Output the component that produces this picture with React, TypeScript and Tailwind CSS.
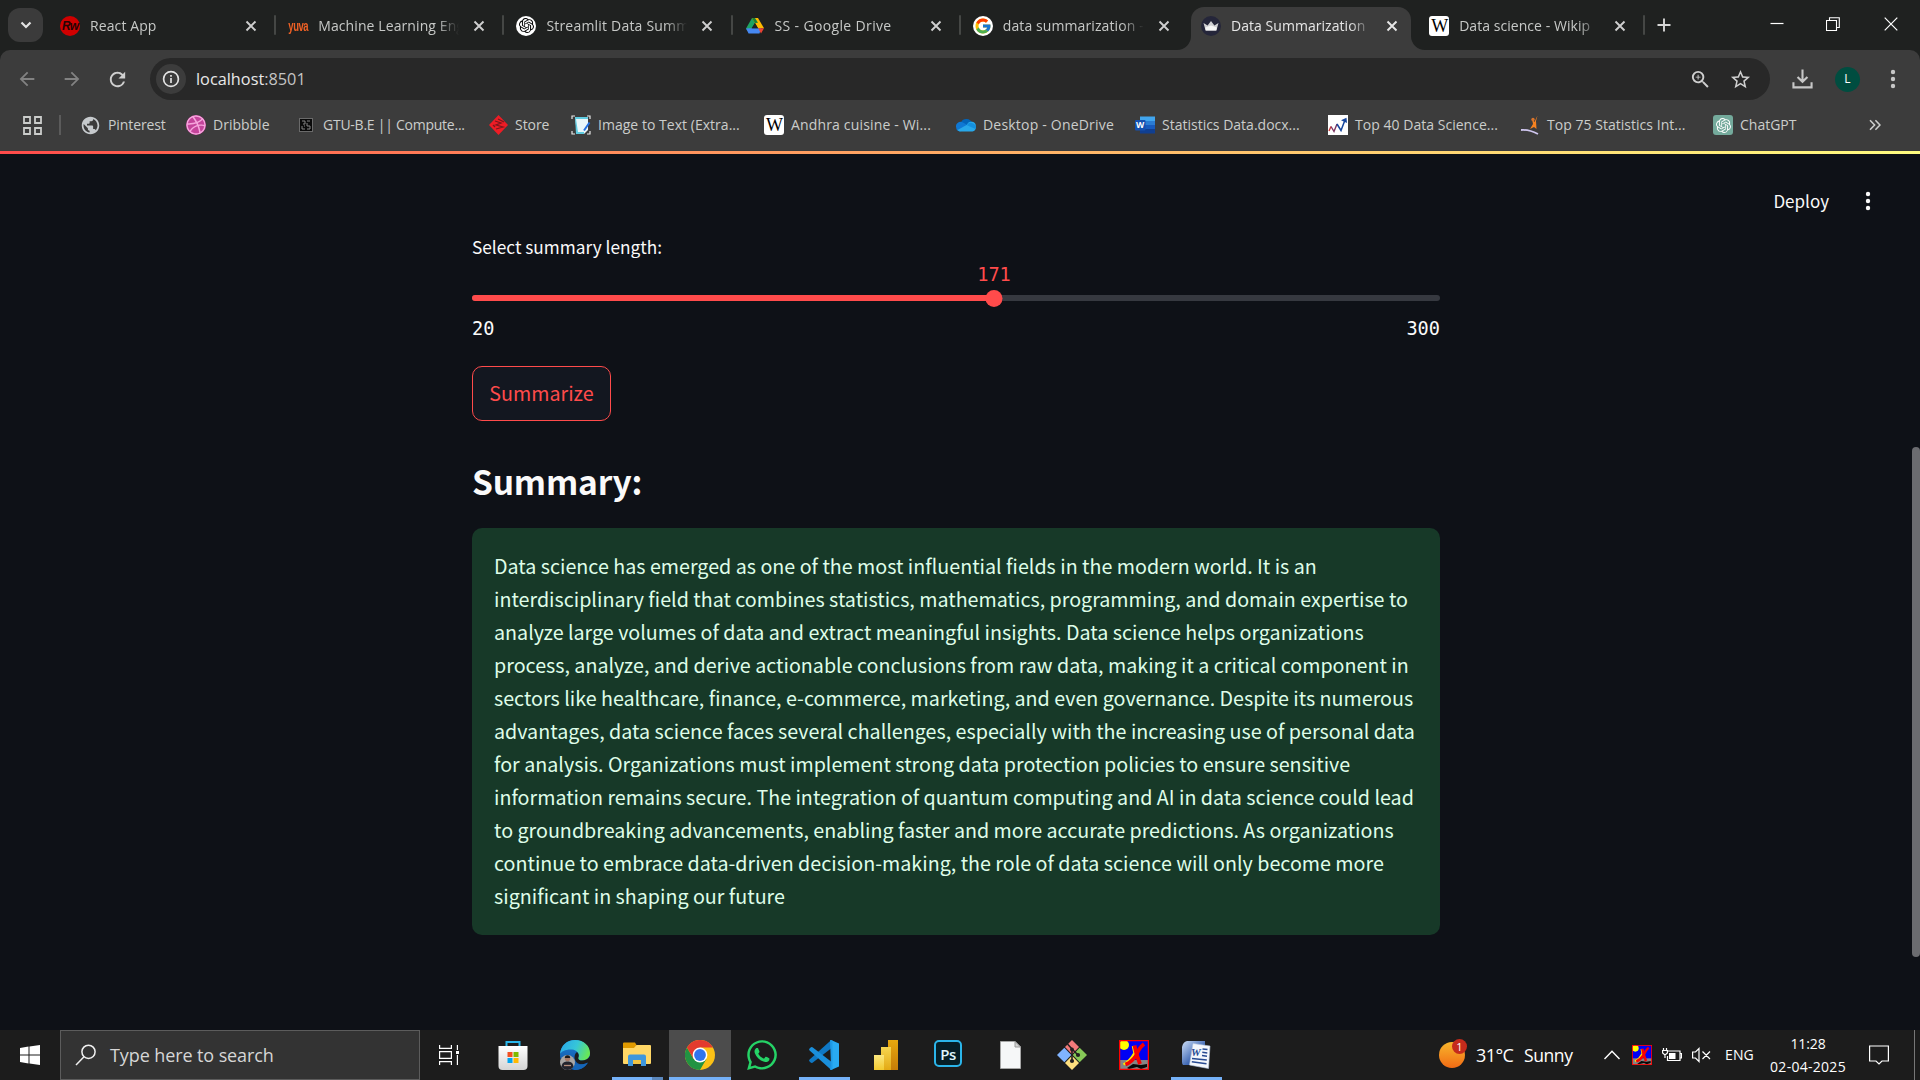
import React from "react";
import type { ReactNode } from "react";
import { FcGoogle } from "react-icons/fc";
import { SiOpenai } from "react-icons/si";
import { FaDribbble, FaWhatsapp } from "react-icons/fa";
import { MdArrowBack, MdArrowForward, MdRefresh, MdStarOutline, MdZoomIn, MdPublic } from "react-icons/md";

/* ---------- favicons ---------- */

const Wiki = () => (
  <span className="flex h-5 w-5 items-center justify-center rounded-[3px] bg-white font-['Liberation_Serif',serif] text-[18px] leading-5 tracking-[-1px] text-black">W</span>
);

const ReactWorld = () => (
  <span className="flex h-5 w-5 items-center justify-center rounded-full bg-[#d00000] font-['Liberation_Sans',sans-serif] text-[12px] font-bold italic leading-5 tracking-[-1px] text-[#240404]">Rw</span>
);

const Yuva = () => (
  <span className="flex h-5 w-5 flex-col items-center justify-center">
    <span className="scale-y-150 font-['Liberation_Sans',sans-serif] text-[9.5px] font-bold leading-[14px] tracking-[-0.5px] text-[#ef6125]">yuva</span>
  </span>
);

const OpenAi = () => (
  <span className="flex h-5 w-5 items-center justify-center rounded-full bg-white text-black"><SiOpenai size={15} /></span>
);

const Drive = () => (
  <svg width="20" height="20" viewBox="0 0 20 20">
    <path d="M7 2 L10 6.8 L4 16.6 L1 12.6z" fill="#1ea362" />
    <path d="M7 2 H13 L19 12.3 H13z" fill="#ffba00" />
    <path d="M7 2 H10 L13 6.8 L10 7z" fill="#188038" />
    <path d="M4.2 12.3 H16 L14.5 17.5 H3.6 L1 12.6z" fill="#4688f1" />
    <path d="M13.2 12.3 H19 L16 17.4z" fill="#ea4335" />
    <path d="M10 7 L13 12.3 H7z" fill="#1f2120" />
  </svg>
);

const GoogleFav = () => (
  <span className="flex h-5 w-5 items-center justify-center rounded-full bg-white"><FcGoogle size={18} /></span>
);

const Crown = () => (
  <span className="flex h-5 w-5 items-center justify-center rounded-full bg-[#25263a]">
    <svg width="16" height="12" viewBox="0 0 16 12">
      <path d="M.5 3 L4.6 5.4 L8 1 L11.4 5.4 L15.5 3 L13.4 10.5 H2.6z" fill="#d0d0d3" />
      <path d="M2.3 7.5 L8 5.5 L13.8 7.5 L13.2 10.5 H2.8z" fill="#f6f6f6" />
    </svg>
  </span>
);

/* ---------- tab strip ---------- */

const CloseX = ({ bright }: { bright?: boolean }) => (
  <svg width="12" height="12" viewBox="0 0 12 12" className={bright ? "text-[#e8e8e8]" : "text-[#cfcfcf]"}>
    <path d="M1.5 1.5 L10.5 10.5 M10.5 1.5 L1.5 10.5" stroke="currentColor" strokeWidth="1.9" />
  </svg>
);

type TabProps = { icon: ReactNode; title: string; active?: boolean; sep?: boolean; tight?: string };

const Tab = ({ icon, title, active, sep, tight = "tracking-[0.1px]" }: TabProps) => (
  <div className={"relative flex h-[43px] w-[228.2px] shrink-0 items-center pb-[6px] pl-[12px] " + (active ? "text-[#e6e6e6]" : "text-[#c7c9c7]")}>
    {active && (
      <div className="absolute bottom-0 left-[2.5px] top-0 w-[220px] rounded-t-[13px] bg-[#3c3c3c]">
        <svg className="absolute bottom-0 left-[-14px]" width="14" height="14"><path d="M14 0 V14 H0 A14 14 0 0 0 14 0z" fill="#3c3c3c" /></svg>
        <svg className="absolute bottom-0 right-[-14px]" width="14" height="14"><path d="M0 0 V14 H14 A14 14 0 0 1 0 0z" fill="#3c3c3c" /></svg>
      </div>
    )}
    <div className="relative shrink-0">{icon}</div>
    <div className={"relative ml-[10px] w-[142px] whitespace-nowrap text-[14px] leading-5 [mask-image:linear-gradient(to_right,#000_119px,transparent_141px)] " + tight}>{title}</div>
    <div className="relative ml-[13px]"><CloseX bright={active} /></div>
    {sep && <div className="absolute right-0 top-[8px] h-5 w-[2px] rounded bg-[#454745]" />}
  </div>
);

const TabStrip = () => (
  <div className="flex h-[50px] items-end bg-[#1f2120]">
    <div className="mb-2 ml-2 flex h-[34px] w-[35px] items-center justify-center rounded-[12px] bg-[#3b3b3b]">
      <svg width="12" height="8" viewBox="0 0 12 8"><path d="M1.5 1.5 L6 6 L10.5 1.5" fill="none" stroke="#e3e3e3" strokeWidth="2.2" /></svg>
    </div>
    <div className="ml-[5px] flex">
      <Tab icon={<ReactWorld />} title="React App" sep />
      <Tab icon={<Yuva />} title="Machine Learning Eng" sep />
      <Tab icon={<OpenAi />} title="Streamlit Data Summ" sep tight="tracking-[0.2px]" />
      <Tab icon={<Drive />} title="SS - Google Drive" sep tight="tracking-[0.35px]" />
      <Tab icon={<GoogleFav />} title="data summarization -" />
      <Tab icon={<Crown />} title="Data Summarization" active tight="tracking-[0.05px]" />
      <Tab icon={<Wiki />} title="Data science - Wikip" sep tight="tracking-[0.05px]" />
    </div>
    <svg className="mb-[18px] ml-[12px]" width="14" height="14"><path d="M7 .5 V13.5 M.5 7 H13.5" stroke="#d6d6d6" strokeWidth="1.9" /></svg>
    <div className="mb-[19px] ml-auto mr-[22px] flex items-center text-white">
      <svg width="14" height="14"><path d="M.5 6.5 H13.5" stroke="currentColor" strokeWidth="1.2" /></svg>
      <svg className="ml-[42px]" width="14" height="14"><path d="M.5 3.5 H10.5 V13.5 H.5z M3.5 3.5 V.7 H13.3 V10.5 H10.5" fill="none" stroke="currentColor" strokeWidth="1.1" /></svg>
      <svg className="ml-[44px]" width="14" height="14"><path d="M.7 .7 L13.3 13.3 M13.3 .7 L.7 13.3" stroke="currentColor" strokeWidth="1.2" /></svg>
    </div>
  </div>
);

/* ---------- toolbar ---------- */

const Kebab = () => (
  <svg width="6" height="20" viewBox="0 0 6 20" fill="currentColor"><circle cx="3" cy="3" r="2.2" /><circle cx="3" cy="10" r="2.2" /><circle cx="3" cy="17" r="2.2" /></svg>
);

const Toolbar = () => (
  <div className="flex h-[58px] items-center bg-[#3c3c3c]">
    <MdArrowBack className="ml-[16px] text-[#828282]" size={22} />
    <MdArrowForward className="ml-[23px] text-[#828282]" size={22} />
    <MdRefresh className="ml-[23px] text-[#cfcfcf]" size={23} />
    <div className="ml-[21px] flex h-[42px] w-[1620px] items-center rounded-full bg-[#282828]">
      <div className="ml-[6px] flex h-[30px] w-[30px] items-center justify-center rounded-full bg-[#3c3c3c]">
        <svg width="18" height="18" viewBox="0 0 18 18"><circle cx="9" cy="9" r="7.4" fill="none" stroke="#e3e3e3" strokeWidth="1.7" /><path d="M9 8 V13 M9 5 V6.8" stroke="#e3e3e3" strokeWidth="1.7" /></svg>
      </div>
      <div className="ml-[10px] text-[16.3px] leading-6 text-[#e8e8e8]">localhost<span className="text-[#c4c4c4]">:8501</span></div>
      <MdZoomIn className="ml-auto text-[#cfcfcf]" size={23} />
      <MdStarOutline className="ml-[17px] mr-[18px] text-[#cfcfcf]" size={23} />
    </div>
    <svg className="ml-[22px]" width="21" height="22" viewBox="0 0 22 22"><path d="M11 1 V13.5 M5.8 8.8 L11 14 L16.2 8.8 M1.5 14.5 V19.8 H20.5 V14.5" fill="none" stroke="#c7c7c7" strokeWidth="2.2" /></svg>
    <div className="ml-[22px] flex h-[25px] w-[25px] items-center justify-center rounded-full bg-[#004d40] text-[12px] text-white">L</div>
    <div className="ml-[30px] text-[#c7c7c7]"><Kebab /></div>
  </div>
);

/* ---------- bookmarks ---------- */

const GtuIcon = () => (
  <svg width="14" height="14" viewBox="0 0 14 14"><rect width="14" height="14" fill="#6a6a6a" /><rect x="1" y="1" width="12" height="12" fill="#0a0a0a" /><path d="M3 3 H6 V6 H4 M8 3 H11 M8 5 V8 H11 V11 H8 M3 8 V11 H6 M5 8 H6" fill="none" stroke="#858585" /></svg>
);
const StoreIcon = () => (
  <svg width="19" height="20" viewBox="0 0 19 20"><path d="M9.5 0 L19 10 L9.5 20 L0 10z" fill="#ee1c25" /><path d="M6 6 L12 8 L7 10 L14 12 L7 14 M9 4 L15 7 M4 10 L6 12" fill="none" stroke="#7c161c" strokeWidth="1.3" /></svg>
);
const ImageTextIcon = () => (
  <svg width="20" height="20" viewBox="0 0 20 20"><path d="M4 2 H17 V15 L13 19 H6z" fill="#e9f7fb" /><path d="M4 2 H17 V4 H5 L7 17 H13 V19 H5z" fill="#5fcbe0" /><path d="M1 4 V1 H4 M16 1 H19 V4 M1 16 V19 H4 M16 19 H19 V16" fill="none" stroke="#e8e8e8" strokeWidth="1.2" /><path d="M18.5 7.5 L13 15.5" stroke="#1f6fe0" strokeWidth="2" /></svg>
);
const OneDriveIcon = () => (
  <svg width="20" height="20" viewBox="0 0 20 20"><path d="M5 7.2 A6 6 0 0 1 16 8 L15 12 H4z" fill="#0364b8" /><path d="M0.2 12.5 A4.5 4.5 0 0 1 7 7.5 L13 11 L4 16.4 A4 4 0 0 1 .2 12.5z" fill="#0f78d4" /><path d="M11 9.8 A4.5 4.5 0 0 1 19.7 12 A3.6 3.6 0 0 1 16.5 16.4 H4 A4 4 0 0 1 1.5 15z" fill="#28a8ea" /><path d="M11 10.3 A4.5 4.5 0 0 1 16.5 8.2 A4.5 4.5 0 0 1 19.5 14z" fill="#1490df" /></svg>
);
const WordIcon = () => (
  <span className="relative block h-5 w-5">
    <svg width="20" height="20" viewBox="0 0 20 20"><path d="M5 1.5 H20 V6 H5z" fill="#41a5ee" /><path d="M5 6 H20 V10 H5z" fill="#2b7cd3" /><path d="M5 10 H20 V14 H5z" fill="#185abd" /><path d="M5 14 H20 V18.5 H5z" fill="#103f91" /><rect x="0" y="5" width="10.5" height="10.5" rx="1" fill="#1450b0" /></svg>
    <span className="absolute left-0 top-[5px] w-[10px] text-center text-[8.5px] font-bold leading-[10px] text-white">W</span>
  </span>
);
const ChartIcon = () => (
  <svg width="20" height="20" viewBox="0 0 20 20"><rect width="20" height="20" fill="#fff" /><path d="M1 16 L3 11.5" stroke="#d43a3a" strokeWidth="1.4" /><path d="M3 11.5 L6 16.5 L9 9" fill="none" stroke="#7d3560" strokeWidth="1.4" /><path d="M9 9 L13 15.5 L17 5" fill="none" stroke="#17479e" strokeWidth="1.5" /><path d="M13 5.200 L18.500 2.800 L19 8z" fill="#17479e" /></svg>
);
const AnalyticsIcon = () => (
  <svg width="18" height="20" viewBox="0 0 18 20"><path d="M16.5 .5 L15 6 L15.5 14 L13 12 L9 14 L12 9 L11 4 L13.5 7z" fill="#f58220" /><circle cx="12" cy="4.5" r="1.7" fill="#d9742b" /><path d="M0 15 C5 14.5 9 15 17 19" fill="none" stroke="#cfc6ee" strokeWidth="1.9" /></svg>
);

const Bookmark = ({ icon, label, className }: { icon: ReactNode; label: string; className: string }) => (
  <div className={"flex shrink-0 items-center gap-2 whitespace-nowrap text-[14px] leading-5 " + className}>{icon}<span className="-ml-px -mt-px">{label}</span></div>
);

const Bookmarks = () => (
  <div className="flex h-[43px] items-center bg-[#3c3c3c] pb-[9px] text-[#cbcdcb]">
    <svg className="ml-[23px]" width="19" height="19" viewBox="0 0 19 19"><path d="M1 1 H7 V7 H1z M12 1 H18 V7 H12z M1 12 H7 V18 H1z M12 12 H18 V18 H12z" fill="none" stroke="currentColor" strokeWidth="1.8" /></svg>
    <div className="ml-[17px] h-5 w-[2px] bg-[#5b5b5b]" />
    <Bookmark className="ml-[19px] w-[106px] tracking-[-0.1px]" icon={<MdPublic size={21} className="text-[#c6cacd]" />} label="Pinterest" />
    <Bookmark className="w-[113px]" icon={<FaDribbble size={20} className="rounded-full bg-[#c4449b] text-[#f6a5dd]" />} label="Dribbble" />
    <Bookmark className="w-[190px] gap-[11px]! tracking-[-0.25px]" icon={<GtuIcon />} label="GTU-B.E || Compute..." />
    <Bookmark className="w-[82px] tracking-[-0.05px]" icon={<StoreIcon />} label="Store" />
    <Bookmark className="w-[193px] tracking-[0.03px]" icon={<ImageTextIcon />} label="Image to Text (Extra..." />
    <Bookmark className="w-[192px] tracking-[0.16px]" icon={<Wiki />} label="Andhra cuisine - Wi..." />
    <Bookmark className="w-[179px] tracking-[0.2px]" icon={<OneDriveIcon />} label="Desktop - OneDrive" />
    <Bookmark className="w-[193px]" icon={<WordIcon />} label="Statistics Data.docx..." />
    <Bookmark className="w-[193px] tracking-[0.03px]" icon={<ChartIcon />} label="Top 40 Data Science..." />
    <Bookmark className="w-[192px] gap-[9px]! tracking-[0.03px]" icon={<AnalyticsIcon />} label="Top 75 Statistics Int..." />
    <Bookmark className="" icon={<span className="flex h-5 w-5 items-center justify-center rounded-[3px] bg-[#74aa9c] text-white"><SiOpenai size={15} /></span>} label="ChatGPT" />
    <svg className="ml-auto mr-[39px]" width="12" height="12" viewBox="0 0 12 12"><path d="M1 1.2 L5.6 6 L1 10.8 M6.4 1.2 L11 6 L6.4 10.8" fill="none" stroke="currentColor" strokeWidth="1.6" /></svg>
  </div>
);

/* ---------- page ---------- */

const min = 20;
const max = 300;
const value = 171;
const summary = [
  "Data science has emerged as one of the most influential fields in the modern world. It is an",
  "interdisciplinary field that combines statistics, mathematics, programming, and domain expertise to",
  "analyze large volumes of data and extract meaningful insights. Data science helps organizations",
  "process, analyze, and derive actionable conclusions from raw data, making it a critical component in",
  "sectors like healthcare, finance, e-commerce, marketing, and even governance. Despite its numerous",
  "advantages, data science faces several challenges, especially with the increasing use of personal data",
  "for analysis. Organizations must implement strong data protection policies to ensure sensitive",
  "information remains secure. The integration of quantum computing and AI in data science could lead",
  "to groundbreaking advancements, enabling faster and more accurate predictions. As organizations",
  "continue to embrace data-driven decision-making, the role of data science will only become more",
  "significant in shaping our future",
];

const Page = () => {
  const pct = ((value - min) / (max - min)) * 100;
  return (
    <div className="flex h-[876px] bg-[#0e1117] font-['Noto_Sans_CJK_SC',sans-serif] text-[#fafafa]">
      <div className="flex flex-1 flex-col">
        <div className="flex h-[80px] items-end justify-end pr-[41px]">
          <div className="mb-[21px] text-[17px] leading-6">Deploy</div>
          <div className="mb-[23px] ml-[36px]"><Kebab /></div>
        </div>
        <div className="ml-[472px] w-[968px]">
          <div className="mt-[1px] text-[17.25px] leading-6">Select summary length:</div>
          <div className="relative mt-[36px] h-[6px] rounded-full bg-[#363940]">
            <div className="h-full rounded-full bg-[#ff4b4b]" style={{ width: pct + "%" }} />
            <div className="absolute top-[-5.5px] h-[17px] w-[17px] -translate-x-1/2 rounded-full bg-[#ff4b4b]" style={{ left: pct + "%" }} />
            <div className="absolute top-[-32px] -translate-x-1/2 font-['DejaVu_Sans_Mono',monospace] text-[18.6px] leading-6 text-[#ff4b4b]" style={{ left: pct + "%" }}>{value}</div>
          </div>
          <div className="mt-[16px] flex justify-between font-['DejaVu_Sans_Mono',monospace] text-[18.6px] leading-6">
            <span>{min}</span>
            <span>{max}</span>
          </div>
          <button className="mt-[25px] flex h-[55px] w-[139px] items-center justify-center rounded-[10px] border border-[#ff4b4b] bg-[#131720] pb-[2px] text-[19.7px] leading-8 text-[#ff4b4b]">Summarize</button>
          <h2 className="mt-[36px] text-[33.5px] font-bold leading-[48px] tracking-[-0.2px]">Summary:</h2>
          <div className="mt-[23px] h-[407px] whitespace-nowrap rounded-[10px] bg-[#173928] pl-[22px] pt-[21px] text-[19.7px] leading-[33px] text-[#dffde9]">
            {summary.map((line) => <div key={line}>{line}</div>)}
          </div>
        </div>
      </div>
      <div className="w-[8px] pt-[293px]"><div className="h-[510px] rounded-full bg-[#6b6c70]" /></div>
    </div>
  );
};

/* ---------- taskbar ---------- */

const TaskView = () => (
  <svg width="20" height="20" viewBox="0 0 20 20" fill="none" stroke="#fff" strokeWidth="1.2"><path d="M.6 0 V3.4 H12.4 V0 M.6 6.6 H12.4 V13.4 H.6z M.6 20 V16.6 H12.4 V20 M18.4 0 V5 M18.4 10 V20" /><path d="M17 6 H20 V9 H17z" fill="#fff" stroke="none" /></svg>
);
const MsStore = () => (
  <svg width="30" height="30" viewBox="0 0 30 30"><defs><linearGradient id="st" x1="0" y1="0" x2="0" y2="1"><stop offset="0" stopColor="#fff" /><stop offset="1" stopColor="#d4d4d4" /></linearGradient></defs><path d="M8.5 6 V2 H21.5 V6" fill="none" stroke="#28b5ea" strokeWidth="2" /><path d="M.5 6 H29.5 V26 A4 4 0 0 1 25.5 30 H4.5 A4 4 0 0 1 .5 26z" fill="url(#st)" /><path d="M9.5 12 H14.5 V17 H9.5z" fill="#f25022" /><path d="M15.5 12 H20.5 V17 H15.5z" fill="#7fba00" /><path d="M9.5 18 H14.5 V23 H9.5z" fill="#00a4ef" /><path d="M15.5 18 H20.5 V23 H15.5z" fill="#ffb900" /></svg>
);
const Edge = () => (
  <svg width="30" height="30" viewBox="0 0 30 30">
    <defs>
      <linearGradient id="e1" x1="0" y1=".3" x2="1" y2=".6"><stop offset="0" stopColor="#2aa9e8" /><stop offset=".5" stopColor="#36c6d8" /><stop offset="1" stopColor="#6bea4e" /></linearGradient>
      <linearGradient id="e2" x1="0" y1="0" x2="0" y2="1"><stop offset="0" stopColor="#1b7fd4" /><stop offset="1" stopColor="#0f4f9e" /></linearGradient>
    </defs>
    <circle cx="15" cy="15" r="15" fill="url(#e2)" />
    <path d="M0 14 C1 5 7 0 15 0 C24 0 30 6 30 13 C30 18 26 20.5 22 20.5 C18.5 20.5 17.5 19 18.3 17.5 C20 14 17 10 12 9.5 C6 9 1 11.5 0 14z" fill="url(#e1)" />
    <path d="M18.5 17 C17.5 19.5 20 20.7 22 20.6 C25 20.6 28 19.5 30 16 L30 21 L27.5 23.3 C22 26 15 24 14.5 17.5 C14.5 14.5 16 12.5 17 12 C19 13.5 19 16 18.5 17z" fill="#1b1c1c" />
    <path d="M10 16 C11 24 19 26.5 28 22.5 C25 28 19 30.5 14 30 C10 27 8.5 20 10 16z" fill="#1566b8" />
    <circle cx="7.5" cy="22.5" r="7.5" fill="#a8a6a4" />
    <path d="M1.5 27 C2 22 5 21.5 7.5 21.5 C10 21.5 13 22 13.5 27 C10 31 5 31 1.5 27z" fill="#23242c" />
    <circle cx="7.5" cy="18.6" r="2.7" fill="#a87b68" /><path d="M4.8 18 A2.7 2.7 0 0 1 10.2 18z" fill="#1c1a1c" /><path d="M4 25.5 H11" stroke="#b58c7a" strokeWidth="1.3" />
  </svg>
);
const Explorer = () => (
  <svg width="28" height="24" viewBox="0 0 28 24"><path d="M0 1.5 A1 1 0 0 1 1 .5 H12 L13.5 3 V8 H0z" fill="#e09a00" /><path d="M0 6 H11 L13.5 3 H27 A1 1 0 0 1 28 4 V21 A1 1 0 0 1 27 22 H1 A1 1 0 0 1 0 21z" fill="#ffd766" /><path d="M5 24 V14.5 A2 2 0 0 1 7 12.5 H21 A2 2 0 0 1 23 14.5 V24 H18 V18 H10 V24z" fill="#3f97dd" /><path d="M10 18 H18 V22 H10z" fill="#f4c443" /></svg>
);
const Chrome = () => (
  <svg width="30" height="30" viewBox="0 0 30 30"><circle cx="15" cy="15" r="15" fill="#fbc116" /><path d="M2 7.5 A15 15 0 0 0 15 30 L21.5 18.75 L8.5 18.75z" fill="#229342" /><path d="M2 7.5 A15 15 0 0 1 28 7.5 H15 L8.5 18.75z" fill="#e33b2e" /><circle cx="15" cy="15" r="7.4" fill="#fff" /><circle cx="15" cy="15" r="5.9" fill="#2f74ee" /></svg>
);
const VsCode = () => (
  <svg width="30" height="30" viewBox="0 0 30 30"><path d="M22 0 L30 3.5 V26.5 L22 30z" fill="#29aaf2" /><path d="M22 .3 V8.5 L3.5 22.7 Q2.5 23.3 1.6 22.5 L.4 21.3 Q-.3 20.4 .6 19.5z" fill="#0f78c4" /><path d="M22 29.7 V21.5 L3.5 7.3 Q2.5 6.7 1.6 7.5 L.4 8.7 Q-.3 9.6 .6 10.5z" fill="#1a8fdc" /><path d="M21 0 L23.5 .4 V29.6 L21 30 L22 26z" fill="#1f9ae6" /></svg>
);
const PowerBi = () => (
  <svg width="24" height="30" viewBox="0 0 24 30"><defs><linearGradient id="p1" x1="0" y1="0" x2="0" y2="1"><stop stopColor="#e8a80e" /><stop offset="1" stopColor="#c67c08" /></linearGradient><linearGradient id="p2" x1="0" y1="0" x2="0" y2="1"><stop stopColor="#f6d550" /><stop offset="1" stopColor="#e3a914" /></linearGradient><linearGradient id="p3" x1="0" y1="0" x2="0" y2="1"><stop stopColor="#fbe67e" /><stop offset="1" stopColor="#f2c92e" /></linearGradient></defs><rect x="14" width="10" height="30" fill="url(#p1)" /><rect x="7" y="7" width="10" height="23" fill="url(#p2)" /><rect y="15" width="10" height="15" fill="url(#p3)" /></svg>
);
const Photoshop = () => (
  <div className="mb-[3px] flex h-[27px] w-[28px] items-center justify-center rounded-[5px] border-2 border-[#2bb5ea] bg-[#061e26] font-['Open_Sans',sans-serif] text-[15px] font-semibold leading-5 tracking-[-0.5px] text-[#dff4fc]">Ps</div>
);
const FileIcon = () => (
  <svg width="21" height="28" viewBox="0 0 21 28"><path d="M.5 .5 H15 L20.5 6 V27.5 H.5z" fill="#f6f7f8" stroke="#a5a5a5" /><path d="M15 .5 V6 H20.5z" fill="#d2d2d2" stroke="#9a9a9a" /></svg>
);
const GitIcon = () => (
  <svg width="30" height="30" viewBox="0 0 30 30"><path d="M15 0 L22 7 L15 14.3 L8 7z" fill="#f37a7a" /><path d="M7.3 7.800 L14.3 15 L7.3 22.200 L0 15z" fill="#80b3ff" /><path d="M22.700 7.800 L30 15 L22.700 22.200 L15.700 15z" fill="#87c957" /><path d="M15 15.700 L22 23 L15 30 L8 23z" fill="#ffe07f" /><path d="M10.5 4 L15 9 V21 M15 9 L21 15" fill="none" stroke="#231f20" strokeWidth="1.6" /><circle cx="15" cy="9.5" r="1.900" fill="#231f20" /><circle cx="15" cy="21" r="2.100" fill="#231f20" /><circle cx="21" cy="15" r="2.100" fill="#231f20" /></svg>
);
const XIcon = ({ size }: { size: number }) => (
  <svg width={size} height={size} viewBox="0 0 30 30"><rect width="30" height="30" fill="#0000f4" /><path d="M0 20 H30 V30 H0z" fill="#858585" /><path d="M8 28 L14 24 L22 25 L28 24 L28 27 L22 29 L18 27 L10 29z" fill="#080808" /><circle cx="5" cy="5" r="5" fill="#ff0" /><path d="M14 6 L15.500 13 Q11 21 4.500 24.5" stroke="#ffe600" strokeWidth="2.500" fill="none" /><path d="M25 4 Q20 8 17.5 15 Q13 22 6.5 24.5" stroke="#f80000" strokeWidth="3.600" fill="none" /><path d="M15.500 5.500 L17.500 14 L21 24" stroke="#f80000" strokeWidth="3.800" fill="none" /><rect x=".6" y=".6" width="28.8" height="28.8" fill="none" stroke="#f00" strokeWidth="1.3" /></svg>
);
const OldWord = () => (
  <span className="relative block h-[30px] w-[30px]">
    <svg width="30" height="30" viewBox="0 0 30 30"><defs><linearGradient id="w" x1="0" y1="0" x2="1" y2="1"><stop stopColor="#cfe0f8" /><stop offset=".6" stopColor="#3f68b4" /><stop offset="1" stopColor="#1d3c80" /></linearGradient></defs><path d="M6 1 H24 V25 H2 Q1 24 1 22 V7 Q2 2 6 1z" fill="url(#w)" /><path d="M12 3.5 L29 6 L27.5 28.5 L8.5 25z" fill="#f4f7fc" stroke="#b4c4de" strokeWidth=".6" /><path d="M21.5 9 L26.5 9.6 M21.3 12.3 L26.300 12.900 M21 15.600 L26 16.200 M11 18.500 L25.8 20 M10.800 21.800 L25.5 23.700" stroke="#274a92" strokeWidth="1.5" /></svg>
    <span className="absolute left-[10px] top-[6px] font-['Liberation_Serif',serif] text-[11px] font-bold italic leading-3 text-[#274a92]">W</span>
  </span>
);

const Slot = ({ children, open, active }: { children: ReactNode; open?: boolean; active?: boolean }) => (
  <div className={"flex h-full w-[62px] shrink-0 flex-col items-center " + (active ? "bg-[#4c4c4c]" : "")}>
    <div className="flex h-[47px] items-center pt-[3px]">{children}</div>
    {open && <div className={"h-[3px] bg-[#75b1f8] " + (active ? "w-full" : "w-[51px]")} />}
  </div>
);

const Taskbar = () => (
  <div className="flex h-[50px] items-stretch bg-[#1c1c1c] text-white">
    <div className="flex w-[60px] items-center justify-center">
      <svg width="20" height="20" viewBox="0 0 20 20" fill="#fff"><path d="M0 3 L8.5 1.6 V9.5 H0z M9.5 1.5 L20 0 V9.5 H9.5z M0 10.5 H8.5 V18.4 L0 17z M9.5 10.5 H20 V20 L9.5 18.5z" /></svg>
    </div>
    <div className="flex w-[360px] items-center border border-[#5c5c5c] bg-[#333]">
      <svg className="ml-[14px]" width="22" height="22" viewBox="0 0 22 22" fill="none" stroke="#f0f0f0" strokeWidth="1.5"><circle cx="13.5" cy="7.8" r="6.6" /><path d="M9 12.8 L1 21" /></svg>
      <div className="ml-[13px] text-[18px] leading-6 tracking-[-0.1px] text-[#d6d6d6]">Type here to search</div>
    </div>
    <div className="flex">
      <Slot><div className="mr-1"><TaskView /></div></Slot>
      <Slot><MsStore /></Slot>
      <Slot><Edge /></Slot>
      <div className="flex h-full w-[62px] shrink-0 flex-col items-center">
        <div className="flex h-[47px] items-center pt-[1px]"><Explorer /></div>
        <div className="flex h-[3px] w-[51px] bg-[#5b87bc]"><div className="w-[40px] bg-[#75b1f8]" /></div>
      </div>
      <div className="ml-[1px] flex">
        <Slot open active><Chrome /></Slot>
        <Slot><FaWhatsapp size={34} className="text-[#25d366]" /></Slot>
        <Slot open><VsCode /></Slot>
        <Slot><PowerBi /></Slot>
        <Slot><Photoshop /></Slot>
        <Slot><FileIcon /></Slot>
        <Slot><GitIcon /></Slot>
        <Slot><XIcon size={30} /></Slot>
        <Slot open><OldWord /></Slot>
      </div>
    </div>
    <div className="ml-auto flex items-center">
      <div className="relative mr-[11px] h-[26px] w-[26px] rounded-full bg-linear-to-b from-[#f6b52c] to-[#f06a14]">
        <div className="absolute left-[13px] top-[-3px] flex h-[15px] w-[15px] items-center justify-center rounded-full bg-[#c42b1c] text-[11px] leading-none">1</div>
      </div>
      <div className="w-[48px] text-[18px] leading-6 tracking-[-0.6px]">31°C</div>
      <div className="w-[80px] text-[17.5px] leading-6 tracking-[-0.4px]">Sunny</div>
      <svg width="16" height="10" viewBox="0 0 16 10"><path d="M.5 9 L8 1.2 L15.5 9" fill="none" stroke="#fff" strokeWidth="1.4" /></svg>
      <div className="ml-[12px]"><XIcon size={20} /></div>
      <svg className="ml-[10px]" width="20" height="14" viewBox="0 0 20 14" fill="none" stroke="#fff" strokeWidth="1.2"><path d="M5.5 3 H18 V12.5 H5.5 V8 M18.5 5.5 H19.5 V10 H18.5 M1.5 0 V2.5 M4.5 0 V2.5 M.6 2.5 H5.4 V5 L3 7 L.6 5z M3 7 V10" /><path d="M7 5 H13.5 V11 H7z" fill="#fff" stroke="none" /></svg>
      <svg className="ml-[10px]" width="19" height="16" viewBox="0 0 19 16" fill="none" stroke="#fff" strokeWidth="1.2"><path d="M.6 5 H3.5 L7 1.5 V14.5 L3.5 11 H.6z M10.5 4.5 L18 12 M18 4.5 L10.5 12" /></svg>
      <div className="ml-[14px] w-[45px] text-[14px] leading-5 tracking-[0.15px]">ENG</div>
      <div className="flex w-[76px] flex-col items-center text-[14px] leading-[23px]">
        <span className="tracking-[-0.1px]">11:28</span>
        <span className="tracking-[0.28px]">02-04-2025</span>
      </div>
      <svg className="ml-[23px]" width="20" height="20" viewBox="0 0 20 20"><path d="M.6 1 H19.4 V16 H13 L10 19 L7 16 H.6z" fill="none" stroke="#fff" strokeWidth="1.2" /></svg>
      <div className="ml-[25px] mr-[5px] h-[50px] w-px bg-[#777]" />
    </div>
  </div>
);

export default function App() {
  return (
    <div className="flex h-[1080px] w-[1920px] flex-col overflow-hidden bg-[#0e1117] font-['Open_Sans',sans-serif]">
      <TabStrip />
      <div className="flex flex-col bg-[#1f2120]">
        <div className="overflow-hidden rounded-t-[10px]">
          <Toolbar />
          <Bookmarks />
        </div>
      </div>
      <div className="h-[3px] shrink-0 bg-linear-to-r from-[#ff4b4b] to-[#fffd80]" />
      <Page />
      <Taskbar />
    </div>
  );
}
